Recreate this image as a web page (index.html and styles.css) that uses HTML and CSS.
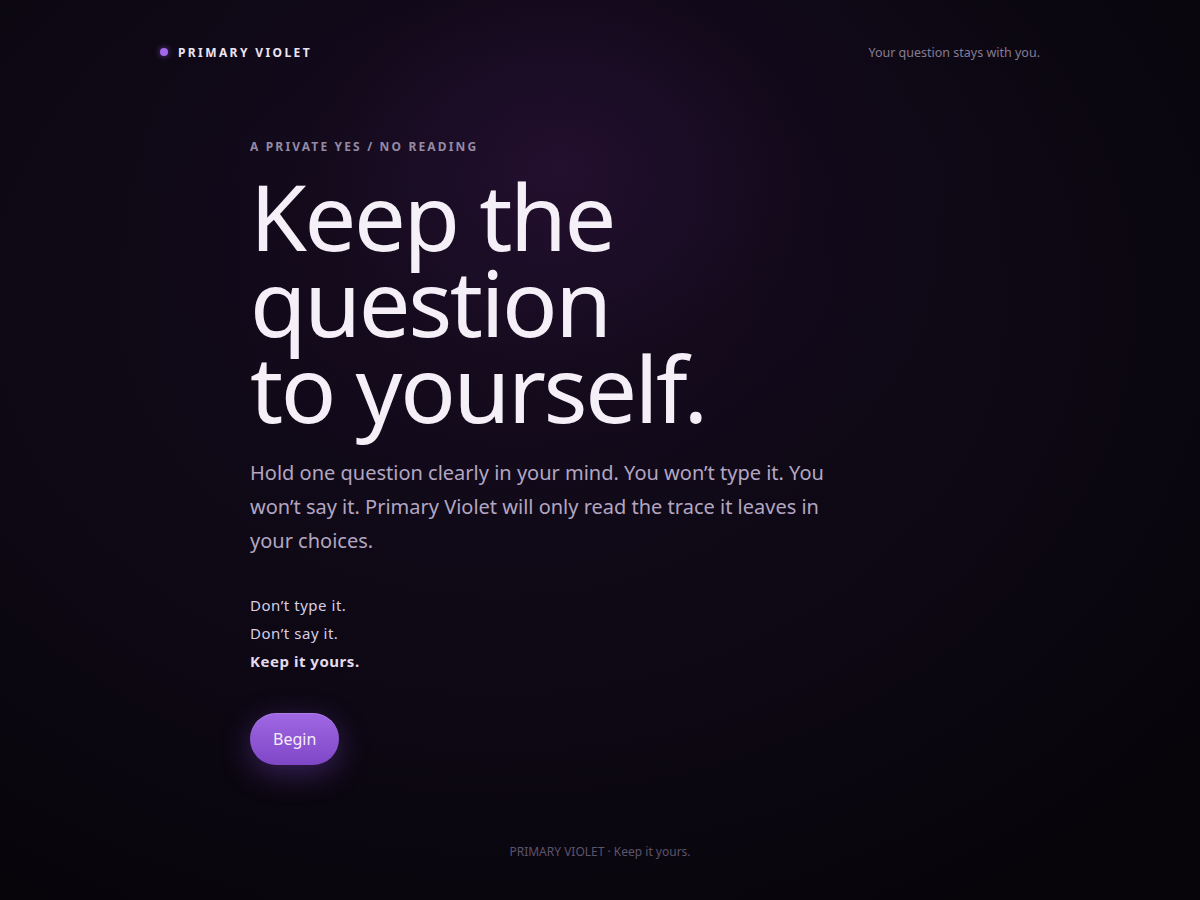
FILE: index.html
```html
<!DOCTYPE html>
<html lang="en">
<head>
<meta charset="utf-8">
<title>Primary Violet</title>
<link rel="stylesheet" href="styles.css">
</head>
<body>
<div class="page">
  <header class="topbar">
    <div class="brand"><span class="dot"></span><span class="brand-name">PRIMARY VIOLET</span></div>
    <div class="tagline">Your question stays with you.</div>
  </header>
  <main class="hero">
    <p class="eyebrow">A PRIVATE YES / NO READING</p>
    <h1 class="title">Keep the<br>question<br>to yourself.</h1>
    <p class="lead">Hold one question clearly in your mind. You won’t type it. You won’t say it. Primary Violet will only read the trace it leaves in your choices.</p>
    <ul class="rules">
      <li>Don’t type it.</li>
      <li>Don’t say it.</li>
      <li class="strong">Keep it yours.</li>
    </ul>
    <button class="begin">Begin</button>
  </main>
  <footer class="foot">PRIMARY VIOLET · Keep it yours.</footer>
</div>
</body>
</html>
```
FILE: styles.css
```css
* { box-sizing: border-box; }
html, body { margin: 0; padding: 0; }
body {
  background: #08050c;
  font-family: "Noto Sans", "Open Sans", sans-serif;
  color: #f3ecf8;
}
.page {
  width: 1200px;
  height: 900px;
  display: flex;
  flex-direction: column;
  background:
    radial-gradient(ellipse 440px 360px at 560px 170px, rgba(52, 20, 68, 0.5), rgba(28, 12, 40, 0.22) 55%, rgba(0,0,0,0) 100%),
    radial-gradient(ellipse 900px 700px at 500px 300px, #140b1c 0%, #0d0814 60%, #07050a 100%);
}
.topbar {
  width: 880px;
  margin: 0 auto;
  padding-top: 43px;
  height: 61px;
  display: flex;
  justify-content: space-between;
  align-items: center;
}
.brand { display: flex; align-items: center; gap: 10px; }
.dot {
  width: 8px; height: 8px; border-radius: 50%;
  background: #a468ec;
  box-shadow: 0 0 6px rgba(164, 104, 236, 0.6);
}
.brand-name {
  font-size: 12px;
  font-weight: 700;
  letter-spacing: 0.2em;
  color: #ece4f4;
}
.tagline {
  font-size: 12.5px;
  color: #867c94;
}
.hero {
  width: 700px;
  margin-left: 250px;
  padding-top: 77px;
  flex: 1;
}
.eyebrow {
  margin: 0;
  font-size: 12px;
  font-weight: 700;
  letter-spacing: 0.18em;
  color: #948aa4;
  line-height: 18px;
}
.title {
  margin: 17px 0 0;
  font-size: 92px;
  font-weight: 400;
  line-height: 86px;
  letter-spacing: -0.026em;
  color: #f5eff8;
}
.lead {
  margin: 25px 0 0;
  width: 590px;
  font-size: 20px;
  line-height: 34px;
  color: #b3a6c2;
}
.rules {
  list-style: none;
  margin: 33px 0 0;
  padding: 0;
  font-size: 15px;
  line-height: 28px;
  letter-spacing: 0.035em;
  color: #d8cee3;
}
.rules .strong { font-weight: 700; color: #e4dbee; }
.begin {
  margin-top: 38px;
  height: 52px;
  padding: 0 23px;
  border: none;
  border-radius: 26px;
  font-family: inherit;
  font-size: 16px;
  color: #f4ecfb;
  background: linear-gradient(180deg, #a068e4 0%, #7f46c6 100%);
  box-shadow: 0 8px 30px rgba(140, 80, 220, 0.35), inset 0 1px 0 rgba(255,255,255,0.15);
}
.foot {
  text-align: center;
  font-size: 12px;
  color: #5d536b;
  padding-bottom: 40px;
}
```
